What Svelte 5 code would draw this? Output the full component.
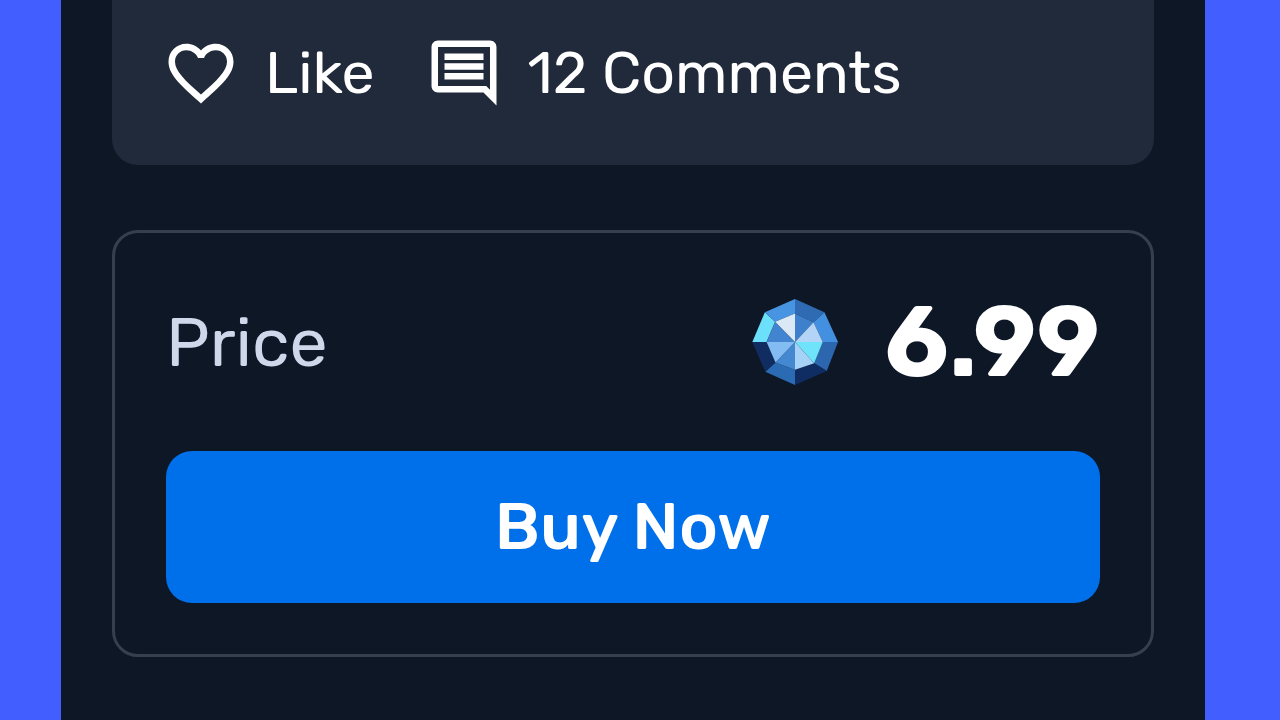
<script lang="ts">
	interface Facet {
		points: string;
		fill: string;
	}

	interface Props {
		comments?: number;
		price?: number;
	}

	let { comments = 12, price = 6.99 }: Props = $props();

	let liked = $state(false);

	const facets: Facet[] = [
		{ points: '166,28 255,68 222,98 166,72', fill: '#2e6bb2' },
		{ points: '255,68 296,158 250,158 222,98', fill: '#4490e0' },
		{ points: '296,158 262,246 224,222 250,158', fill: '#2c66ae' },
		{ points: '262,246 166,288 166,242 224,222', fill: '#0f2d62' },
		{ points: '166,288 76,248 107,220 166,242', fill: '#2b6bb3' },
		{ points: '76,248 37,158 80,158 107,220', fill: '#102c60' },
		{ points: '37,158 75,68 106,97 80,158', fill: '#6ce0fb' },
		{ points: '75,68 166,28 166,72 106,97', fill: '#4794e2' },
		{ points: '166,158 166,72 222,98', fill: '#3f80cd' },
		{ points: '166,158 222,98 250,158', fill: '#b3d4f6' },
		{ points: '166,158 250,158 224,222', fill: '#6fe3fa' },
		{ points: '166,158 224,222 166,242', fill: '#a6d2f8' },
		{ points: '166,158 166,242 107,220', fill: '#4488d2' },
		{ points: '166,158 107,220 80,158', fill: '#82bcf3' },
		{ points: '166,158 80,158 106,97', fill: '#4284d0' },
		{ points: '166,158 106,97 166,72', fill: '#dbe9f7' }
	];
</script>

<main class="panel">
	<section class="card actions" aria-label="Reactions">
		<button class="action" type="button" aria-pressed={liked} onclick={() => (liked = !liked)}>
			<svg class="icon" viewBox="0 0 24 24" aria-hidden="true">
				<path
					d="M16.5 3c-1.74 0-3.41.81-4.5 2.09C10.91 3.81 9.24 3 7.5 3 4.42 3 2 5.42 2 8.5c0 3.78 3.4 6.86 8.55 11.54L12 21.35l1.45-1.32C18.6 15.36 22 12.28 22 8.5 22 5.42 19.58 3 16.5 3zm-4.4 15.55l-.1.1-.1-.1C7.14 14.24 4 11.39 4 8.5 4 6.5 5.5 5 7.5 5c1.54 0 3.04.99 3.57 2.36h1.87C13.46 5.99 14.96 5 16.5 5c2 0 3.5 1.5 3.5 3.5 0 2.89-3.14 5.74-7.9 10.05z"
				/>
			</svg>
			<span>Like</span>
		</button>
		<button class="action" type="button">
			<svg class="icon" viewBox="0 0 24 24" aria-hidden="true">
				<path
					d="M21.99 4c0-1.1-.89-2-1.99-2H4c-1.1 0-2 .9-2 2v12c0 1.1.9 2 2 2h14l4 4-.01-18zM20 4v13.17L18.83 16H4V4h16zM6 12h12v2H6zm0-3h12v2H6zm0-3h12v2H6z"
				/>
			</svg>
			<span>{comments} Comments</span>
		</button>
	</section>

	<section class="card purchase" aria-label="Purchase">
		<div class="price-row">
			<span class="price-label">Price</span>
			<span class="price">
				<svg class="gem" viewBox="36 28 260 260" aria-hidden="true">
					{#each facets as facet}
						<polygon points={facet.points} fill={facet.fill} />
					{/each}
				</svg>
				<span class="amount">{price.toFixed(2)}</span>
			</span>
		</div>
		<button class="buy" type="button">Buy Now</button>
	</section>
</main>

<style>
	:global(body) {
		margin: 0;
		background: #435eff;
	}

	.panel {
		box-sizing: border-box;
		min-height: 100vh;
		margin: 0 75px 0 61px;
		padding: 0 51px 51px;
		display: flex;
		flex-direction: column;
		gap: 65px;
		background: #0e1726;
		color: #fff;
		font-family: Rubik, Roboto, 'Liberation Sans', sans-serif;
	}

	.card {
		border-radius: 26px;
	}

	.actions {
		display: flex;
		flex-wrap: wrap;
		gap: 50px;
		padding: 34px 50px 53px;
		border-top-left-radius: 0;
		border-top-right-radius: 0;
		background: #212a3a;
	}

	.action {
		display: flex;
		align-items: center;
		gap: 25px;
		padding: 0;
		border: 0;
		background: none;
		color: inherit;
		font: inherit;
		font-size: 59px;
		line-height: 78px;
		cursor: pointer;
	}

	.icon {
		width: 78px;
		height: 78px;
		fill: currentColor;
	}

	.purchase {
		display: flex;
		flex-direction: column;
		gap: 51px;
		padding: 51px;
		border: 3px solid #363f4e;
	}

	.price-row {
		display: flex;
		align-items: center;
		justify-content: space-between;
	}

	.price-label {
		color: #cfd8ea;
		font-size: 68px;
	}

	.price {
		display: flex;
		align-items: center;
		gap: 46px;
	}

	.gem {
		width: 86px;
		height: 86px;
	}

	.amount {
		font-size: 99px;
		font-weight: 700;
		line-height: 116px;
	}

	.buy {
		padding: 0;
		border: 0;
		border-radius: 26px;
		background: #0070ea;
		color: inherit;
		font: inherit;
		font-size: 66px;
		font-weight: 500;
		line-height: 152px;
		cursor: pointer;
	}
</style>
